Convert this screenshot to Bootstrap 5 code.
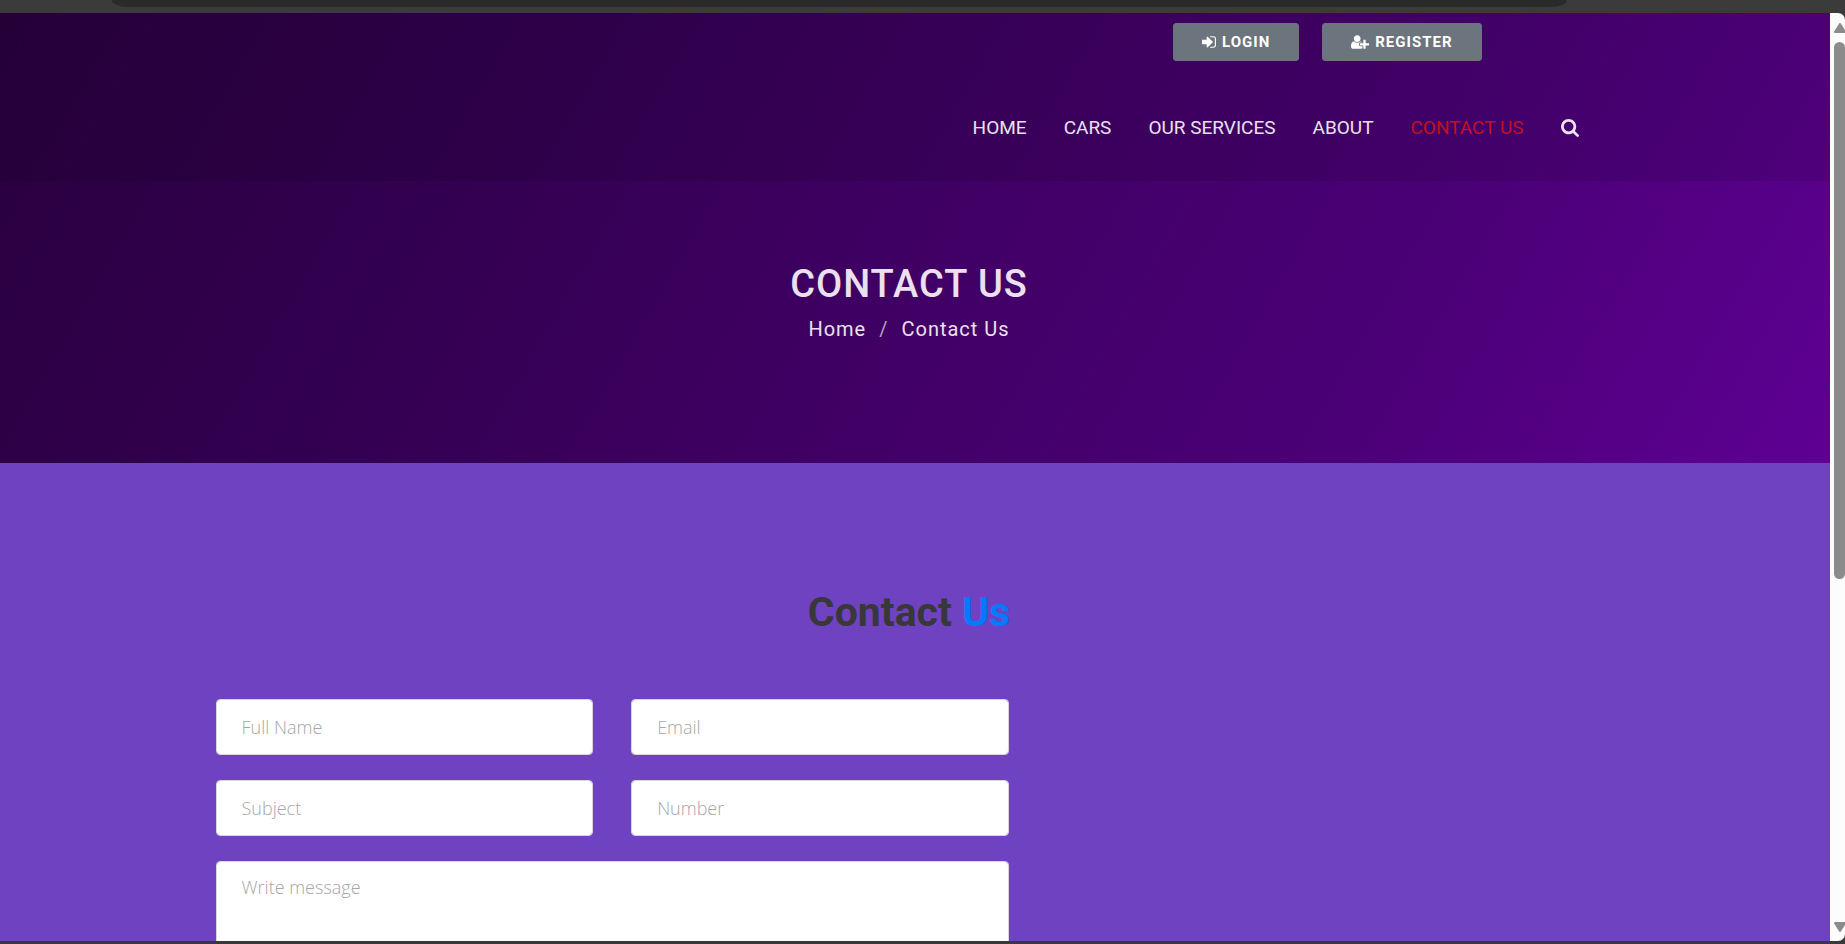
<!DOCTYPE html>
<html lang="en">
<head>
<meta charset="utf-8">
<meta name="viewport" content="width=device-width, initial-scale=1">
<title>Contact Us</title>
<link href="https://cdn.jsdelivr.net/npm/bootstrap@5.3.0/dist/css/bootstrap.min.css" rel="stylesheet">
<style>
  body { font-family: Roboto, "Liberation Sans", sans-serif; background: #3b3b3b; }
  .window-top { height: 13px; background: #3b3b3b; padding: 0 278px 0 112px; }
  .address-bar { height: 7px; background: #2a2a2a; border-radius: 0 0 16px 16px / 0 0 7px 7px; }
  .window-bottom { height: 3px; background: #3a3838; }
  .viewport { min-height: 0; }
  .page { min-width: 0; background: #6f42c1; }
  .page .container { max-width: 1425px; --bs-gutter-x: 38px; }
  .page .row { --bs-gutter-x: 38px; }
  .hero, .contact { padding-right: 12px; }
  .hero { background: linear-gradient(120deg, #29003e 0%, #330051 27%, #400065 52%, #4b0077 76%, #5e0094 100%); color: #ebe1ee; }
  .hero a { color: inherit; text-decoration: none; }
  .site-header { background: rgba(0, 0, 0, .1); margin-right: -12px; padding-right: 12px; }
  .top-strip { height: 62px; padding: 10px 121px 0 0; gap: 23px; }
  .btn-account { --bs-btn-bg: #6c757d; --bs-btn-color: #fff; --bs-btn-border-color: #6c757d; --bs-btn-hover-bg: #5c636a; --bs-btn-hover-color: #fff; height: 38px; padding: 0 28px; border-radius: 3px; font-size: 15px; line-height: 36px; font-weight: 700; letter-spacing: 1px; display: flex; align-items: center; gap: 6px; }
  .site-nav { height: 106px; gap: 37px; padding-right: 24px; }
  .site-nav .nav-link { padding: 0; color: #ebe1ee; font-size: 19px; line-height: 28px; }
  .site-nav .nav-link.active { color: #c2101e; }
  .hero-copy { height: 282px; padding-top: 80px; }
  .hero-copy h1 { font-size: 38px; line-height: 46px; font-weight: 500; letter-spacing: 1px; margin: 0; }
  .crumbs { font-size: 20px; line-height: 30px; letter-spacing: 1px; margin-top: 7px; --bs-breadcrumb-item-padding-x: 13px; --bs-breadcrumb-divider-color: #b5a0c0; }
  .contact { padding-top: 123px; }
  .contact h2 { font-size: 41px; line-height: 52px; font-weight: 700; color: #383838; margin: 0 0 61px; }
  .contact h2 span { color: #007bff; }
  .contact form.row { --bs-gutter-y: 25px; }
  .contact .form-control { height: 56px; padding: 0 25px; border-color: #d8d4dc; border-radius: 4px; font-family: "Open Sans", sans-serif; font-size: 18px; font-weight: 300; color: #333; }
  .contact .form-control::placeholder { color: #a6a6a6; opacity: 1; }
  .contact textarea.form-control { height: 220px; padding: 12px 25px; resize: none; }
  .scroll-track { width: 15px; background: #fcfcfc; padding: 10px 0 9px 4px; border-radius: 0 7px 7px 0; }
  .scroll-track svg { flex: none; }
  .scroll-space { min-height: 0; padding-top: 9px; }
  .scroll-thumb { width: 11px; height: 61%; background: #8b8b8b; border-radius: 6px; }
</style>
<script src="https://cdn.jsdelivr.net/npm/bootstrap@5.3.0/dist/js/bootstrap.bundle.min.js"></script>
</head>
<body>
<div class="vh-100 d-flex flex-column overflow-hidden">
  <div class="window-top flex-shrink-0"><div class="address-bar"></div></div>
  <div class="viewport d-flex flex-grow-1">
    <div class="page flex-grow-1 overflow-hidden">
      <div class="hero">
        <header class="site-header">
          <div class="container">
            <div class="top-strip d-flex justify-content-end align-items-start">
              <button type="button" class="btn btn-account">
                <svg width="14" height="14" viewBox="128 128 1536 1536" fill="currentColor" aria-hidden="true"><path d="M1312 896q0 26-19 45l-544 544q-19 19-45 19t-45-19-19-45v-288h-448q-26 0-45-19t-19-45v-384q0-26 19-45t45-19h448v-288q0-26 19-45t45-19 45 19l544 544q19 19 19 45zm352-352v704q0 119-84.5 203.5t-203.5 84.5h-320q-13 0-22.5-9.5t-9.5-22.5q0-4-1-20t-.5-26.5 3-23.5 10-19.5 20.5-6.5h320q66 0 113-47t47-113v-704q0-66-47-113t-113-47h-312l-11.5-1-11.5-3-8-5.500-7-9-2-13.500q0-4-1-20t-.5-26.500 3-23.500 10-19.500 20.500-6.500h320q119 0 203.500 84.500t84.500 203.500z"/></svg>
                LOGIN
              </button>
              <button type="button" class="btn btn-account">
                <svg width="18" height="14" viewBox="0 128 2048 1536" fill="currentColor" aria-hidden="true"><path d="M704 896q-159 0-271.500-112.500T320 512t112.500-271.500T704 128t271.500 112.500T1088 512 975.500 783.500 704 896zm960 128h352q13 0 22.500 9.500t9.500 22.500v192q0 13-9.500 22.500t-22.500 9.500h-352v352q0 13-9.500 22.500t-22.500 9.500h-192q-13 0-22.500-9.500t-9.500-22.500v-352h-352q-13 0-22.500-9.500t-9.500-22.500v-192q0-13 9.500-22.500t22.500-9.500h352V672q0-13 9.500-22.500t22.500-9.500h192q13 0 22.500 9.500t9.500 22.500v352zm-736 224q0 52 38 90t90 38h256v238q-68 50-171 50H267q-121 0-194-69T0 1405q0-53 3.500-103.500t14-109T44 1084t43-97.500 62-81 85.500-53.500T346 832q19 0 39 17 79 61 154.500 91.500T704 971t164.500-30.500T1023 849q20-17 39-17 132 0 217 96h-223q-52 0-90 38t-38 90v192z"/></svg>
                REGISTER
              </button>
            </div>
            <nav class="site-nav nav justify-content-end align-items-center flex-nowrap" aria-label="Main">
              <a class="nav-link" href="#">HOME</a>
              <a class="nav-link" href="#">CARS</a>
              <a class="nav-link" href="#">OUR SERVICES</a>
              <a class="nav-link" href="#">ABOUT</a>
              <a class="nav-link active" aria-current="page" href="#">CONTACT US</a>
              <a class="nav-link d-flex" href="#" aria-label="Search"><svg width="18" height="18" viewBox="64 128 1664 1664" fill="currentColor"><path d="M1216 832q0-185-131.500-316.500t-316.500-131.500-316.500 131.500-131.500 316.500 131.500 316.500 316.500 131.500 316.500-131.500 131.500-316.500zm512 832q0 52-38 90t-90 38q-54 0-90-38l-343-342q-179 124-399 124-143 0-273.500-55.500t-225-150-150-225-55.500-273.500 55.500-273.500 150-225 225-150 273.500-55.500 273.500 55.500 225 150 150 225 55.500 273.500q0 220-124 399l343 343q37 37 37 90z"/></svg></a>
            </nav>
          </div>
        </header>
        <div class="hero-copy text-center">
          <h1>CONTACT US</h1>
          <nav aria-label="Breadcrumb">
            <ol class="crumbs breadcrumb justify-content-center mb-0">
              <li class="breadcrumb-item"><a href="#">Home</a></li>
              <li class="breadcrumb-item"><a href="#">Contact Us</a></li>
            </ol>
          </nav>
        </div>
      </div>
      <main class="contact">
        <div class="container">
          <h2 class="text-center">Contact <span>Us</span></h2>
          <div class="row">
            <div class="col-7">
              <form class="row">
                <div class="col-6"><input type="text" class="form-control" placeholder="Full Name" aria-label="Full Name"></div>
                <div class="col-6"><input type="email" class="form-control" placeholder="Email" aria-label="Email"></div>
                <div class="col-6"><input type="text" class="form-control" placeholder="Subject" aria-label="Subject"></div>
                <div class="col-6"><input type="text" class="form-control" placeholder="Number" aria-label="Number"></div>
                <div class="col-12"><textarea class="form-control" placeholder="Write message" aria-label="Write message"></textarea></div>
              </form>
            </div>
          </div>
        </div>
      </main>
    </div>
    <div class="scroll-track flex-shrink-0 d-flex flex-column" aria-hidden="true">
      <svg width="12" height="10" viewBox="0 0 12 10"><path d="M6 1 11 9H1z" fill="#8b8b8b" stroke="#8b8b8b" stroke-width="2" stroke-linejoin="round"/></svg>
      <div class="scroll-space flex-grow-1"><div class="scroll-thumb"></div></div>
      <svg width="12" height="10" viewBox="0 0 12 10"><path d="M6 9 1 1h10z" fill="#8b8b8b" stroke="#8b8b8b" stroke-width="2" stroke-linejoin="round"/></svg>
    </div>
  </div>
  <div class="window-bottom flex-shrink-0"></div>
</div>
</body>
</html>
